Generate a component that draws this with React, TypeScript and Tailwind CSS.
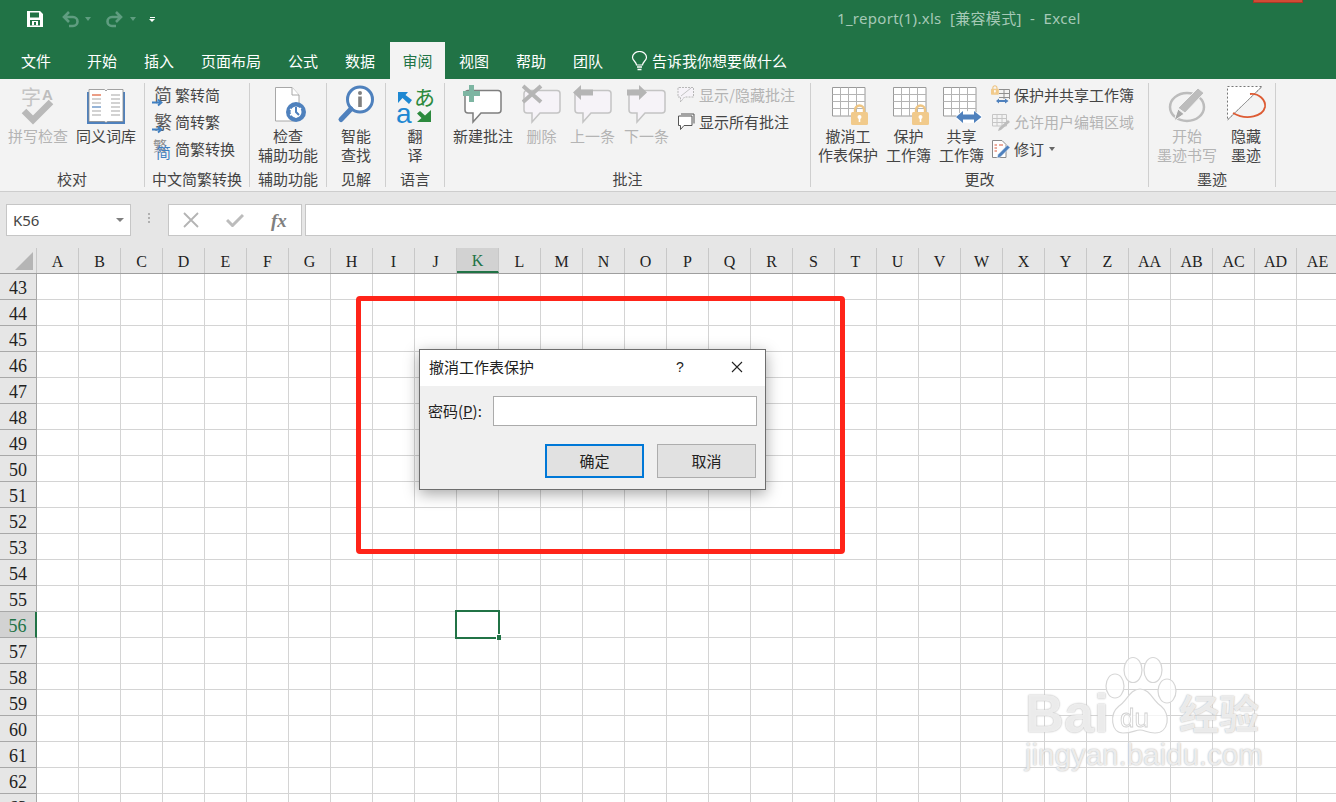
import React from 'react';

const CJK = "[font-family:'Noto_Sans_CJK_SC','Liberation_Sans',sans-serif]";
const COLUMNS = ['A','B','C','D','E','F','G','H','I','J','K','L','M','N','O','P','Q','R','S','T','U','V','W','X','Y','Z','AA','AB','AC','AD','AE'];
const ROWS = Array.from({ length: 21 }, (_, i) => 43 + i);
const TABS = [
  { name: '开始', cls: 'w-[57px]' },
  { name: '插入', cls: 'w-[57px]' },
  { name: '页面布局', cls: 'w-[87px]' },
  { name: '公式', cls: 'w-[57px]' },
  { name: '数据', cls: 'w-[60px]' },
];

// comment bubble shared by the 批注 buttons
const Bubble = ({ fill = '#f6f3f8', stroke = '#c4c4c4' }: { fill?: string; stroke?: string }) => (
  <path d="M5 6.5H35a3 3 0 0 1 3 3V26a3 3 0 0 1-3 3H18L10 38V29H5a3 3 0 0 1-3-3V9.5a3 3 0 0 1 3-3z" fill={fill} stroke={stroke} strokeWidth="1.5" />
);

const SheetGrid = ({ x = 0, y = 0 }: { x?: number; y?: number }) => (
  <g transform={`translate(${x} ${y})`} fill="none" stroke="#9a9a9a" strokeWidth="1">
    <path d="M.5.5H33V29H.5z" fill="#fff" />
    <path d="M.5 7.5H33M.5 14.5H33M.5 21.5H33M8.5.5V29M16.5.5V29M24.5.5V29" stroke="#b4b4b4" />
  </g>
);

const Lock = ({ x, y, s = 1 }: { x: number; y: number; s?: number }) => (
  <g transform={`translate(${x} ${y}) scale(${s})`}>
    <path d="M4 9V6a4.5 4.5 0 0 1 9 0v3" fill="none" stroke="#eec583" strokeWidth="2.4" />
    <rect x="0" y="8" width="17" height="13" rx="1.5" fill="#f1ca8b" />
    <circle cx="8.5" cy="13" r="2" fill="#fff" />
    <rect x="7.7" y="13" width="1.6" height="5" fill="#fff" />
  </g>
);

const IconSpell = () => (
  <svg width="36" height="43" viewBox="0 0 36 43" className="overflow-visible">
    <text x="1" y="21" fontSize="20" fill="#c4c4c4" fontFamily="'Noto Sans CJK SC',sans-serif">字</text>
    <text x="22" y="16" fontSize="15" fontWeight="700" fill="#bdbdbd" fontFamily="'Liberation Sans',sans-serif">A</text>
    <path d="M4 27L13 36L31 18" fill="none" stroke="#b9b9b9" strokeWidth="6.5" />
  </svg>
);

const IconBook = () => (
  <svg width="40" height="43" viewBox="0 0 40 43">
    <path d="M1 8H39V40H1z" fill="#4f81bd" />
    <path d="M3 5.5H18.5L20 7L21.5 5.5H37V37.5H21.5L20 38.5L18.5 37.5H3z" fill="#fff" stroke="#8c8c8c" strokeWidth=".8" />
    <path d="M6 11H15" stroke="#dd5b33" strokeWidth="1.2" />
    <path d="M6 15H15M6 19H15M6 27H15M25 11H34M25 15H34M25 19H34M25 23H34M25 27H34M25 31H34M6 31H15" stroke="#a6a6a6" strokeWidth="1.2" />
    <path d="M6 23H15" stroke="#4f81bd" strokeWidth="1.2" />
  </svg>
);

const IconAccess = () => (
  <svg width="38" height="43" viewBox="0 0 38 43">
    <path d="M6.5 3.5H23L30 11V20H26V37H6.5z" fill="#fff" stroke="#a8a8a8" />
    <path d="M23 3.5V11H30" fill="#fff" stroke="#a8a8a8" />
    <circle cx="27" cy="28" r="10" fill="#4f81bd" />
    <circle cx="27" cy="28" r="5.5" fill="#fff" />
    <path d="M27 23V28L30 31" stroke="#4f81bd" strokeWidth="2" fill="none" />
    <path d="M21 25L24 27M21 31L24 30M27 34V31M32 24L30 26" stroke="#fff" strokeWidth="1.5" />
  </svg>
);

const IconSearch = () => (
  <svg width="40" height="43" viewBox="0 0 40 43">
    <circle cx="24" cy="15.5" r="12.5" fill="#fff" stroke="#4f81bd" strokeWidth="3" />
    <path d="M15 25L5 35.5" stroke="#4f81bd" strokeWidth="5" strokeLinecap="round" />
    <circle cx="24" cy="9" r="2" fill="#808080" />
    <rect x="22.2" y="12.5" width="3.6" height="10.5" fill="#808080" />
  </svg>
);

const IconTranslate = () => (
  <svg width="38" height="43" viewBox="0 0 38 43" className="overflow-visible">
    <path d="M2 8H12L9.5 11L16 16L13 20L6.5 14L2 19z" fill="#1e88d2" />
    <text x="18" y="21" fontSize="21" fill="#2d8a3e" fontFamily="'Noto Sans CJK SC',sans-serif">あ</text>
    <text x="0" y="39" fontSize="28" fill="#1e88d2" fontFamily="'Liberation Sans',sans-serif">a</text>
    <path d="M35 38H21L25.5 34L21 29.5L24 27L29 31.5L35 26z" fill="#2d8a3e" />
  </svg>
);

const IconComment = ({ mark }: { mark: 'new' | 'del' | 'prev' | 'next' }) => (
  <svg width="40" height="43" viewBox="0 0 40 43">
    {mark === 'new' ? <Bubble fill="#fff" stroke="#7f7f7f" /> : <Bubble />}
    {mark === 'new' && <path d="M6 1H11V7H17V12H11V18H6V12H0V7H6z" fill="#7db5a2" />}
    {mark === 'del' && <path d="M1 2L19 18M19 2L1 18" stroke="#b5b5b5" strokeWidth="4" />}
    {mark === 'prev' && <path d="M0 8.5L8 1V5.5H20V11.5H8V16z" fill="#b5b5b5" />}
    {mark === 'next' && <path d="M20 8.5L12 1V5.5H0V11.5H12V16z" fill="#b5b5b5" />}
  </svg>
);

const IconProtect = () => (
  <svg width="40" height="43" viewBox="0 0 40 43">
    <SheetGrid x={4} y={3} />
    <Lock x={23} y={20} />
  </svg>
);

const IconShare = () => (
  <svg width="40" height="43" viewBox="0 0 40 43">
    <SheetGrid x={1} y={3} />
    <ellipse cx="27" cy="33" rx="13" ry="6" fill="#fff" />
    <path d="M14 33L21 27V30.5H32V27L39.5 33L32 39V35.5H21V39z" fill="#4f81bd" />
  </svg>
);

const IconInk = () => (
  <svg width="40" height="43" viewBox="0 0 40 43">
    <ellipse cx="20" cy="23" rx="17" ry="14" fill="none" stroke="#bcbcbc" strokeWidth="2.5" />
    <path d="M31 4L37 9L18 29L11 24z" fill="#bcbcbc" stroke="#f3f3f3" />
    <path d="M11 25L17 30L7 37z" fill="#a9a9a9" stroke="#f3f3f3" />
  </svg>
);

const IconHideInk = () => (
  <svg width="42" height="43" viewBox="0 0 42 43">
    <path d="M2.5 2.5H37L2.5 36z" fill="#fff" stroke="#777" strokeDasharray="2 2" />
    <path d="M37 2.5L2.5 36" stroke="#999" />
    <path d="M25 10C34 9 41 16 40 23C38 32 22 37 8 29" fill="none" stroke="#dd5b33" strokeWidth="1.8" />
  </svg>
);

const IconGlyph = ({ ch, color = '#5a5a5a' }: { ch: string; color?: string }) => (
  <svg width="18" height="22" viewBox="0 0 18 22" className="overflow-visible">
    <text x="1" y="18" fontSize="18" fill={color} fontFamily="'Noto Sans CJK SC',sans-serif">{ch}</text>
    <path d="M-1 18.5H7M5 15.5L8.5 18.5L5 21.5" fill="none" stroke="#3f7fc1" strokeWidth="1.8" />
  </svg>
);

const IconMixed = () => (
  <svg width="18" height="22" viewBox="0 0 18 22" className="overflow-visible">
    <text x="0" y="13" fontSize="14" fill="#8c8c8c" fontFamily="'Noto Sans CJK SC',sans-serif">繁</text>
    <text x="3" y="20" fontSize="15" fill="#3f7fc1" fontFamily="'Noto Sans CJK SC',sans-serif">简</text>
  </svg>
);

const IconDashedNote = () => (
  <svg width="18" height="18" viewBox="0 0 18 18">
    <path d="M2 1.5H16.5V11H7.5L3.5 16V11H1V1.5z" fill="#f6f3f8" stroke="#b8b8b8" strokeDasharray="2 1" />
    <path d="M4 10L14 2" stroke="#c4c4c4" />
  </svg>
);

const IconNote = () => (
  <svg width="18" height="18" viewBox="0 0 18 18">
    <path d="M4 1H17V10.5" fill="none" stroke="#555" />
    <path d="M1.5 3H15V12.5H7L3.5 16.5V12.5H1.5z" fill="#fff" stroke="#555" />
  </svg>
);

const IconShareSmall = () => (
  <svg width="19" height="20" viewBox="0 0 19 20">
    <path d="M8 4.5H18.5V14M8 8.5H18.5M8 12.5H18.5M13 4.5V14" fill="none" stroke="#8f8f8f" />
    <Lock x={0} y={0} s={.46} />
    <path d="M5 16L8 13.5V15H14V13.5L17.5 16L14 18.5V17H8V18.5z" fill="#4f81bd" />
  </svg>
);

const IconAllowEdit = () => (
  <svg width="19" height="20" viewBox="0 0 19 20">
    <path d="M1.5 2.5H15.5V14H1.5zM1.5 6.5H15.5M1.5 10.5H15.5M6 2.5V14M11 2.5V14" fill="none" stroke="#c6c6c6" />
    <path d="M17 8L19 10L10 18L7 19L8 16z" fill="#bdbdbd" />
  </svg>
);

const IconTrack = () => (
  <svg width="19" height="20" viewBox="0 0 19 20">
    <path d="M1.5 1.5H11L15 5.5V18.5H1.5z" fill="#fff" stroke="#8a8a8a" />
    <path d="M3.5 6H6M3.5 9H6M3.5 12H6M8 6H12" stroke="#d9583a" strokeWidth="1.2" />
    <path d="M16.5 6L19 8.5L9.5 18L6 19L7 15.5z" fill="#4f81bd" stroke="#fff" strokeWidth=".5" />
  </svg>
);

const BigButton = ({ icon, lines, off, className = '' }: { icon?: React.ReactNode; lines: string[]; off?: boolean; className?: string }) => (
  <div className={`flex flex-col items-center pt-[1px] ${off ? 'text-[#b4b4b4]' : 'text-[#444444]'} ${className}`}>
    <div className="flex h-[42px] items-start justify-center">{icon}</div>
    {lines.map((line) => (
      <span key={line} className="whitespace-nowrap text-[15px] leading-[19px]">{line}</span>
    ))}
  </div>
);

const SmallButton = ({ icon, label, off, caret }: { icon: React.ReactNode; label: string; off?: boolean; caret?: boolean }) => (
  <div className={`flex h-[24px] items-center gap-[4px] whitespace-nowrap text-[15px] ${off ? 'text-[#b4b4b4]' : 'text-[#444444]'}`}>
    {icon}
    <span>{label}</span>
    {caret && <span className="ml-[1px] h-0 w-0 border-x-[3px] border-t-[4px] border-x-transparent border-t-[#666666]" />}
  </div>
);

const Group = ({ label, className, children }: { label: string; className: string; children: React.ReactNode }) => (
  <div className={`flex h-[104px] shrink-0 flex-col border-r border-[#cfcfcf] ${className}`}>
    <div className="flex h-[87px]">{children}</div>
    <div className="whitespace-nowrap text-center text-[15px] leading-[17px] text-[#444444]">{label}</div>
  </div>
);

const Undo = ({ flip }: { flip?: boolean }) => (
  <svg width="20" height="18" viewBox="0 0 20 18" className={flip ? '-scale-x-100' : ''}>
    <path d="M4 7H13A4.5 4.5 0 0 1 13 16H9M9 2L4 7L9 12" fill="none" stroke="#5f9d80" strokeWidth="2.6" />
  </svg>
);

const Caret = () => <span className="h-0 w-0 border-x-[3.5px] border-t-[4px] border-x-transparent border-t-[#5f9d80]" />;

const Watermark = () => {
  const glow = "text-white/70 [text-shadow:0_0_2px_#bdbdbd,0_0_1px_#cfcfcf]";
  return (
    <div className="pointer-events-none absolute left-[1025px] top-[656px] flex flex-col">
      <div className="flex items-end">
        <span className={`[font-family:'Liberation_Sans',sans-serif] text-[54px] font-bold leading-[54px] ${glow} w-[80px] -mb-[4px]`}>Bai</span>
        <svg width="74" height="80" viewBox="0 0 74 80" className="blur-[0.4px]">
          <g fill="#ffffff" fillOpacity=".75" stroke="#d6d6d6" strokeWidth="1.2">
            <ellipse cx="10" cy="30" rx="9" ry="12" />
            <ellipse cx="28" cy="14" rx="9" ry="12.5" />
            <ellipse cx="48" cy="14" rx="9" ry="12.5" />
            <ellipse cx="62" cy="35" rx="9" ry="12" />
            <path d="M35 33C45 33 48 45 56 50C66 58 64 77 50 77C42 77 40 74 35 74C30 74 28 77 18 77C6 77 4 58 14 50C22 45 25 33 35 33z" />
          </g>
          <text x="15" y="71" fontSize="26" fill="#ffffff" stroke="#cfcfcf" strokeWidth=".8" fontFamily="'Liberation Sans',sans-serif">du</text>
        </svg>
        <span className={`${CJK} text-[40px] font-bold leading-[50px] ${glow} -mb-[1px]`}>经验</span>
      </div>
      <span className={`[font-family:'Liberation_Sans',sans-serif] mt-[1px] text-[29.5px] leading-[36px] ${glow}`}>jingyan.baidu.com</span>
    </div>
  );
};

export default function App() {
  return (
    <div className={`relative flex h-[802px] w-[1336px] flex-col overflow-hidden bg-white ${CJK}`}>
      {/* title bar */}
      <div className="relative flex h-[42px] shrink-0 items-center bg-[#217346] pl-[27px]">
        <svg width="16" height="16" viewBox="0 0 16 16" className="-mt-[4px]">
          <path fillRule="evenodd" d="M0 0H13L16 3V16H0zM3 1.5V6.5H12V1.5zM3 9V14.5H13V9z" fill="#fff" />
          <path d="M5 10H11V14.5H5z" fill="#fff" />
          <path d="M7 11H9V14H7z" fill="#217346" />
        </svg>
        <div className="-mt-[4px] ml-[17px] flex items-center gap-[5px]">
          <Undo />
          <Caret />
        </div>
        <div className="-mt-[4px] ml-[14px] flex items-center gap-[5px]">
          <Undo flip />
          <Caret />
        </div>
        <div className="-mt-[4px] ml-[13px] flex flex-col items-center gap-[1px]">
          <span className="h-[1px] w-[5px] bg-white" />
          <span className="h-0 w-0 border-x-[3px] border-t-[3px] border-x-transparent border-t-white" />
        </div>
        <span className="-mt-[6px] ml-[682px] whitespace-pre [font-family:'Noto_Sans','Noto_Sans_CJK_SC',sans-serif] text-[15px] tracking-[0.3px] text-[#a5c9b6]">1_report(1).xls  [兼容模式]  -  Excel</span>
        <div className="absolute left-[1253px] top-0 h-[3px] w-[50px] border border-t-0 border-[#a33a28] bg-[#d24a35]" />
      </div>

      {/* tabs */}
      <div className="flex h-[37px] shrink-0 items-stretch bg-[#217346] text-[15px] text-white">
        <div className="flex w-[72px] items-center justify-center pt-[1px]">文件</div>
        {TABS.map((tab) => (
          <div key={tab.name} className={`flex items-center pl-[15px] pt-[1px] ${tab.cls}`}>{tab.name}</div>
        ))}
        <div className="flex w-[55px] items-center justify-center bg-[#f3f3f3] pt-[1px] text-[#217346]">审阅</div>
        <div className="flex w-[57px] items-center pl-[14px] pt-[1px]">视图</div>
        <div className="flex w-[57px] items-center pl-[14px] pt-[1px]">帮助</div>
        <div className="flex w-[57px] items-center pl-[14px] pt-[1px]">团队</div>
        <div className="ml-[15px] flex items-center gap-[4px] pt-[1px]">
          <svg width="17" height="20" viewBox="0 0 17 20">
            <path d="M5.5 14C5.5 11 1.5 9.5 1.5 6.5A7 6 0 0 1 15.5 6.5C15.5 9.5 11.5 11 11.5 14z" fill="none" stroke="#fff" strokeWidth="1.2" />
            <path d="M6 16H11M6.5 18.5H10.5" stroke="#fff" strokeWidth="1.4" />
          </svg>
          <span>告诉我你想要做什么</span>
        </div>
      </div>

      {/* ribbon */}
      <div className="flex h-[113px] shrink-0 border-b border-[#cdcdcd] bg-[#f3f3f3] pt-[4px]">
        <Group label="校对" className="w-[145px]">
          <div className="flex gap-[8px] pl-[8px]">
            <BigButton icon={<IconSpell />} lines={['拼写检查']} off />
            <BigButton icon={<IconBook />} lines={['同义词库']} />
          </div>
        </Group>
        <Group label="中文简繁转换" className="w-[105px]">
          <div className="flex flex-col gap-[3px] pl-[8px]">
            <SmallButton icon={<IconGlyph ch="简" />} label="繁转简" />
            <SmallButton icon={<IconGlyph ch="繁" />} label="简转繁" />
            <SmallButton icon={<IconMixed />} label="简繁转换" />
          </div>
        </Group>
        <Group label="辅助功能" className="w-[77px]">
          <BigButton icon={<IconAccess />} lines={['检查', '辅助功能']} className="w-full" />
        </Group>
        <Group label="见解" className="w-[59px]">
          <BigButton icon={<IconSearch />} lines={['智能', '查找']} className="w-full" />
        </Group>
        <Group label="语言" className="w-[59px]">
          <BigButton icon={<IconTranslate />} lines={['翻', '译']} className="w-full" />
        </Group>
        <Group label="批注" className="w-[366px]">
          <div className="flex gap-[5px] pl-[8px]">
            <BigButton icon={<IconComment mark="new" />} lines={['新建批注']} className="w-[60px]" />
            <BigButton icon={<IconComment mark="del" />} lines={['删除']} off className="w-[47px]" />
            <BigButton icon={<IconComment mark="prev" />} lines={['上一条']} off className="w-[45px]" />
            <BigButton icon={<IconComment mark="next" />} lines={['下一条']} off className="w-[53px]" />
            <div className="-ml-[1px] flex flex-col gap-[3px]">
              <SmallButton icon={<IconDashedNote />} label="显示/隐藏批注" off />
              <SmallButton icon={<IconNote />} label="显示所有批注" />
            </div>
          </div>
        </Group>
        <Group label="更改" className="w-[338px]">
          <div className="flex gap-[8px] pl-[7px]">
            <BigButton icon={<IconProtect />} lines={['撤消工', '作表保护']} className="w-[60px]" />
            <BigButton icon={<IconProtect />} lines={['保护', '工作簿']} className="w-[45px]" />
            <BigButton icon={<IconShare />} lines={['共享', '工作簿']} className="w-[45px]" />
            <div className="-ml-[1px] flex flex-col gap-[3px]">
              <SmallButton icon={<IconShareSmall />} label="保护并共享工作簿" />
              <SmallButton icon={<IconAllowEdit />} label="允许用户编辑区域" off />
              <SmallButton icon={<IconTrack />} label="修订" caret />
            </div>
          </div>
        </Group>
        <Group label="墨迹" className="w-[127px]">
          <div className="flex gap-[14px] pl-[8px]">
            <BigButton icon={<IconInk />} lines={['开始', '墨迹书写']} off className="w-[60px]" />
            <BigButton icon={<IconHideInk />} lines={['隐藏', '墨迹']} className="w-[30px]" />
          </div>
        </Group>
      </div>

      {/* formula bar */}
      <div className="flex h-[56px] shrink-0 items-start bg-[#e6e6e6] pl-[6px] pt-[12px]">
        <div className="flex h-[32px] w-[125px] items-center justify-between border border-[#c6c6c6] bg-white pl-[6px] pr-[6px] [font-family:'Noto_Sans',sans-serif] text-[15px] text-[#444444]">
          K56
          <span className="h-0 w-0 border-x-[4px] border-t-[4px] border-x-transparent border-t-[#7f7f7f]" />
        </div>
        <div className="ml-[17px] mt-[9px] flex flex-col gap-[2px]">
          <span className="h-[2px] w-[2px] bg-[#b0b0b0]" />
          <span className="h-[2px] w-[2px] bg-[#b0b0b0]" />
          <span className="h-[2px] w-[2px] bg-[#b0b0b0]" />
        </div>
        <div className="ml-[18px] flex h-[32px] w-[134px] items-center border border-[#c6c6c6] bg-white pl-[14px]">
          <svg width="16" height="16" viewBox="0 0 16 16">
            <path d="M1 1L15 15M15 1L1 15" stroke="#b4b4b4" strokeWidth="1.8" />
          </svg>
          <svg width="18" height="14" viewBox="0 0 18 14" className="ml-[27px]">
            <path d="M1 7L6.5 12.5L17 2" fill="none" stroke="#bcbcbc" strokeWidth="3" />
          </svg>
          <span className="ml-[27px] [font-family:'Liberation_Serif',serif] text-[19px] font-bold italic leading-none text-[#808080]">fx</span>
        </div>
        <div className="ml-[3px] h-[32px] flex-1 border border-r-0 border-[#c6c6c6] bg-white" />
      </div>

      {/* column headers */}
      <div className="flex h-[26px] shrink-0 border-b border-[#9f9f9f] bg-[#e6e6e6] [font-family:'Liberation_Serif',serif] text-[16px] text-[#222222]">
        <div className="flex w-[37px] shrink-0 items-center justify-end border-r border-[#c8c8c8] pr-[3px]">
          <span className="h-0 w-0 border-b-[18px] border-l-[18px] border-b-[#b5b5b5] border-l-transparent" />
        </div>
        {COLUMNS.map((col) => (
          <div
            key={col}
            className={col === 'K'
              ? 'flex w-[42px] shrink-0 items-center justify-center border-b-2 border-r border-b-[#217346] border-r-[#c8c8c8] bg-[#d2d2d2] pt-[3px] text-[#217346]'
              : 'flex w-[42px] shrink-0 items-center justify-center border-r border-[#c8c8c8] pt-[3px]'}
          >
            {col}
          </div>
        ))}
      </div>

      {/* sheet */}
      <div className="flex-1 overflow-hidden">
        {ROWS.map((row) => (
          <div key={row} className="flex h-[26px]">
            <div
              className={row === 56
                ? "flex w-[37px] shrink-0 items-center justify-center border-b border-r-2 border-b-[#a8a8a8] border-r-[#217346] bg-[#d2d2d2] pt-[3px] [font-family:'Liberation_Serif',serif] text-[18px] text-[#217346]"
                : "flex w-[37px] shrink-0 items-center justify-center border-b border-r border-[#a8a8a8] bg-[#e6e6e6] pt-[3px] [font-family:'Liberation_Serif',serif] text-[18px] text-[#222222]"}
            >
              {row}
            </div>
            {COLUMNS.map((col) => (
              <div key={col} className="w-[42px] shrink-0 border-b border-r border-[#d4d4d4]" />
            ))}
          </div>
        ))}
      </div>

      {/* active cell */}
      <div className="absolute left-[455px] top-[610px] h-[29px] w-[45px] border-2 border-[#217346]" />
      <div className="absolute left-[496px] top-[634px] h-[6px] w-[5px] border-l border-t border-white bg-[#217346]" />

      <Watermark />

      {/* red annotation */}
      <div className="absolute left-[356px] top-[296px] h-[258px] w-[489px] rounded-[4px] border-[5px] border-[#ff2419]" />

      {/* dialog */}
      <div className="absolute left-[419px] top-[349px] flex h-[141px] w-[347px] flex-col border border-[#6e6e6e] bg-[#f0f0f0] text-[15px] text-[#222222] shadow-[0_4px_14px_rgba(0,0,0,0.35)]">
        <div className="flex h-[36px] shrink-0 items-center bg-white pb-[2px] pl-[9px]">
          <span>撤消工作表保护</span>
          <span className="ml-[142px] [font-family:'Liberation_Sans',sans-serif] text-[14px]">?</span>
          <svg width="12" height="12" viewBox="0 0 12 12" className="ml-[47px]">
            <path d="M1 1L11 11M11 1L1 11" stroke="#222" strokeWidth="1.1" />
          </svg>
        </div>
        <div className="mt-[10px] flex items-center pl-[8px]">
          <span className="w-[65px] whitespace-nowrap">密码(<span className="underline">P</span>):</span>
          <div className="h-[30px] w-[264px] border border-[#ababab] bg-white" />
        </div>
        <div className="mt-[18px] flex pl-[125px]">
          <div className="flex h-[34px] w-[99px] items-center justify-center border-2 border-[#0078d7] bg-[#e1e1e1]">确定</div>
          <div className="ml-[13px] flex h-[34px] w-[99px] items-center justify-center border border-[#adadad] bg-[#e1e1e1]">取消</div>
        </div>
      </div>
    </div>
  );
}
